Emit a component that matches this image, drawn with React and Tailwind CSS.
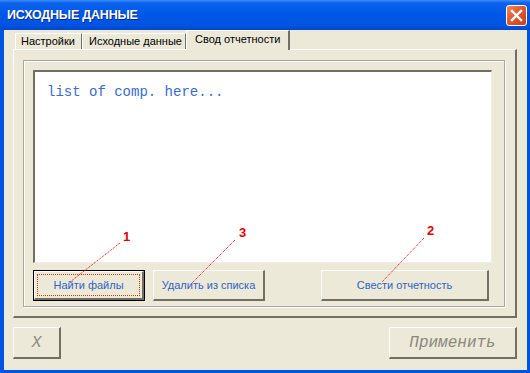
import React from "react";

const sans = { fontFamily: '"Liberation Sans", Arial, sans-serif' };
const mono = { fontFamily: '"Liberation Mono", "Courier New", monospace' };

function RaisedBtn({ className = "", children, def = false }) {
  if (def) {
    return (
      <div className={`border border-black bg-[#ece9d8] ${className}`}>
        <div className="h-full border-t border-l border-t-white border-l-white border-r-2 border-b-2 border-r-[#716f64] border-b-[#716f64] p-[2px]">
          <div className="h-full border border-dotted border-[#c04000] flex items-center justify-center text-[11px] text-[#2f63c6] whitespace-nowrap" style={sans}>
            {children}
          </div>
        </div>
      </div>
    );
  }
  return (
    <div
      className={`bg-[#ece9d8] border-t border-l border-t-white border-l-white border-r-2 border-b-2 border-r-[#716f64] border-b-[#716f64] flex items-center justify-center whitespace-nowrap ${className}`}
    >
      {children}
    </div>
  );
}

export default function App() {
  return (
    <div className="relative w-[530px] h-[373px] flex flex-col bg-[#0054e3] overflow-hidden">
      {/* title bar */}
      <div className="h-[30px] flex items-center justify-between pl-[7px] pr-[3px] bg-[linear-gradient(to_bottom,#3c8dfb_0%,#0a62ee_10%,#0058e8_45%,#0053e0_85%,#0047cf_100%)]">
        <span className="text-white font-bold text-[12.5px] tracking-[-0.2px] [text-shadow:1px_1px_0_#0a2a8a]" style={sans}>
          ИСХОДНЫЕ ДАННЫЕ
        </span>
        <div className="w-[21px] h-[21px] rounded-[3px] border border-white bg-[linear-gradient(135deg,#f08a5e_0%,#e2582e_45%,#c9401b_100%)] flex items-center justify-center">
          <svg width="13" height="13" viewBox="0 0 13 13">
            <path d="M2 2 L11 11 M11 2 L2 11" stroke="white" strokeWidth="2.4" strokeLinecap="square" />
          </svg>
        </div>
      </div>

      {/* body */}
      <div className="flex-1 ml-[4px] mr-[3px] mb-[3px] bg-[#ece9d8] pl-[9px] pr-[10px] flex flex-col">
        {/* tabs */}
        <div className="h-[19px] flex items-end pl-[2px] text-[11px] text-black whitespace-nowrap" style={sans}>
          <div className="w-[67px] h-[16px] border-t border-l border-t-white border-l-white border-r border-r-[#716f64] pl-[5px] leading-[15px]">
            Настройки
          </div>
          <div className="w-[104px] h-[16px] border-t border-l border-t-white border-l-white border-r border-r-[#716f64] pl-[6px] leading-[15px]">
            Исходные данные
          </div>
          <div className="relative z-10 w-[104px] h-[20px] -mb-px bg-[#ece9d8] border-t border-l border-t-white border-l-white border-r-2 border-r-[#716f64] pl-[8px] leading-[16px]">
            Свод отчетности
          </div>
        </div>

        {/* tab panel */}
        <div className="h-[269px] border-t border-l border-t-white border-l-white border-r-2 border-b-2 border-r-[#716f64] border-b-[#716f64] pl-[9px] pt-[10px] pr-[10px]">
          {/* group frame */}
          <div className="h-[247px] border border-[#aca899] shadow-[inset_1px_1px_0_#ffffff,1px_1px_0_#ffffff] pl-[9px] pt-[9px] pr-[12px] flex flex-col">
            {/* list box */}
            <div className="h-[193px] bg-white border-t-2 border-l-2 border-t-[#716f64] border-l-[#716f64] border-r border-b border-r-[#f1efe2] border-b-[#f1efe2] pl-[12px] pt-[6px]">
              <span className="text-[14px] text-[#3a6bd0]" style={mono}>
                list of comp. here...
              </span>
            </div>
            {/* buttons */}
            <div className="mt-[7px] flex items-start">
              <RaisedBtn def className="w-[112px] h-[31px]">
                Найти файлы
              </RaisedBtn>
              <RaisedBtn className="ml-[8px] w-[112px] h-[31px]">
                <span className="text-[11px] text-[#2f63c6]" style={sans}>Удалить из списка</span>
              </RaisedBtn>
              <RaisedBtn className="ml-auto mr-[3px] w-[168px] h-[31px]">
                <span className="text-[11px] text-[#2f63c6]" style={sans}>Свести отчетность</span>
              </RaisedBtn>
            </div>
          </div>
        </div>

        {/* bottom buttons */}
        <div className="mt-[9px] flex justify-between">
          <RaisedBtn className="w-[48px] h-[32px]">
            <span className="text-[16px] italic text-[#8a887c]" style={mono}>X</span>
          </RaisedBtn>
          <RaisedBtn className="w-[128px] h-[32px]">
            <span className="text-[16px] italic text-[#8a887c]" style={mono}>Применить</span>
          </RaisedBtn>
        </div>
      </div>

      {/* annotations */}
      <svg className="absolute left-0 top-0 pointer-events-none" width="530" height="373">
        <g stroke="#e00000" strokeWidth="1" strokeDasharray="1 1" fill="none">
          <line x1="120" y1="243" x2="70" y2="282" />
          <line x1="235" y1="240" x2="192" y2="283" />
          <line x1="424" y1="238" x2="382" y2="282" />
        </g>
        <g fill="#e00000" fontSize="13" fontWeight="bold" fontFamily="Liberation Sans, Arial, sans-serif">
          <text x="123" y="241">1</text>
          <text x="239" y="237">3</text>
          <text x="427" y="235">2</text>
        </g>
      </svg>
    </div>
  );
}
